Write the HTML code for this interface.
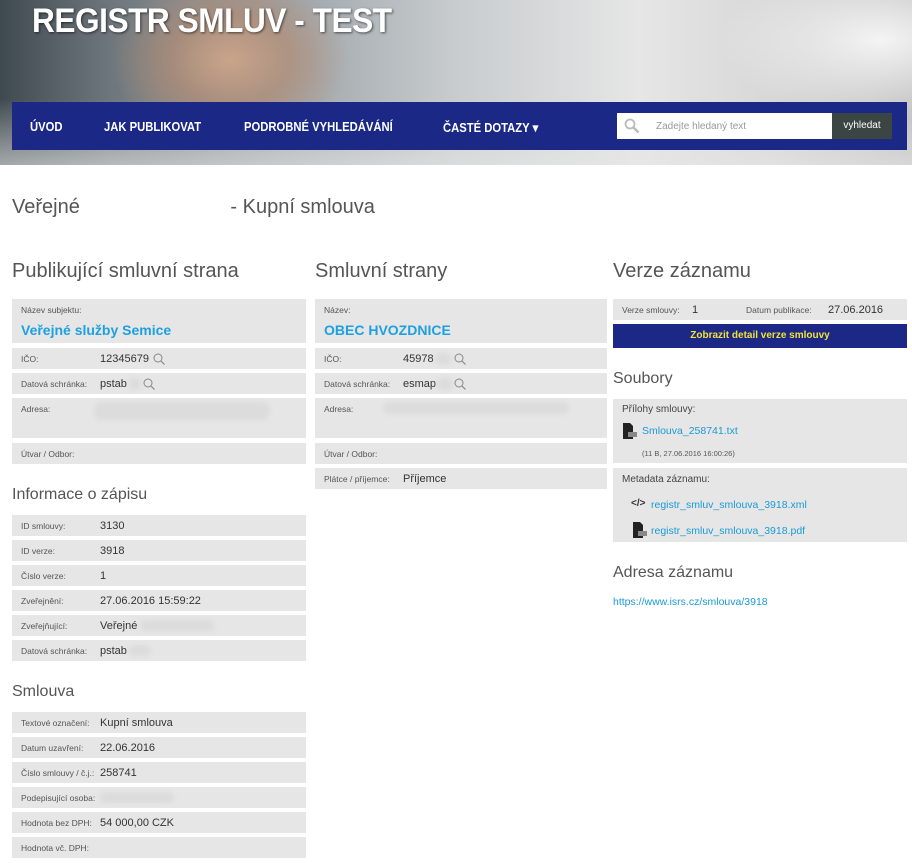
<!DOCTYPE html>
<html><head><meta charset="utf-8"><style>
*{margin:0;padding:0;box-sizing:border-box}
body{width:912px;height:863px;overflow:hidden;background:#fff;font-family:"Liberation Sans",sans-serif;position:relative;color:#333}
.a{position:absolute}
.hdr{left:0;top:0;width:912px;height:165px;background:
radial-gradient(ellipse 120px 90px at 230px 60px,#c9a48a 0%,rgba(180,140,115,.7) 50%,rgba(0,0,0,0) 100%),
radial-gradient(ellipse 160px 80px at 880px 40px,#f4f4f4,rgba(0,0,0,0)),
linear-gradient(180deg,rgba(0,0,0,0) 60%,rgba(230,230,230,.6) 100%),
linear-gradient(90deg,#3f4a50 0%,#6d767c 12%,#9aa2a8 30%,#c8ccce 50%,#e6e6e6 70%,#d7d7d7 85%,#bfbfbf 100%)}
.title{left:32px;top:2px;font-size:34px;font-weight:bold;color:#fff;letter-spacing:-0.5px;transform:scaleX(.93);transform-origin:left;text-shadow:1px 1px 3px rgba(0,0,0,.6)}
.nav{left:12px;top:102px;width:895px;height:48px;background:#1b2885}
.nav span{position:absolute;top:18px;color:#fff;font-weight:bold;font-size:12.5px;transform:scaleX(.9);transform-origin:left}
.row{background:#e6e6e6;height:21px}
.lb{position:absolute;left:9px;top:6px;font-size:8.5px;color:#555}
.vl{position:absolute;left:88px;top:5px;font-size:11px;color:#333}
.h2{font-size:20px;color:#555}
.h3{font-size:16px;color:#555}
.big{position:absolute;left:9px;top:23px;font-size:14px;font-weight:bold;color:#1ea0e0}
.blur{position:absolute;background:#dcdcdc;border-radius:8px;filter:blur(2px)}
a,.lk{color:#1a9ad6;text-decoration:none}
.mag{position:absolute;width:12px;height:12px}
</style></head><body>
<div class="a hdr"></div>
<div class="a title">REGISTR SMLUV - TEST</div>
<div class="a nav">
<span style="left:18px">ÚVOD</span>
<span style="left:92px">JAK PUBLIKOVAT</span>
<span style="left:232px">PODROBNÉ VYHLEDÁVÁNÍ</span>
<span style="left:431px">ČASTÉ DOTAZY ▾</span>
<div class="a" style="left:605px;top:11px;width:215px;height:26px;background:#fff"></div>
<svg class="a" style="left:612px;top:16px" width="16" height="16" viewBox="0 0 16 16"><circle cx="6" cy="6" r="4.5" fill="none" stroke="#bbb" stroke-width="1.8"/><line x1="9.5" y1="9.5" x2="14.5" y2="14.5" stroke="#bbb" stroke-width="2.5"/></svg>
<div class="a" style="left:644px;top:19px;font-size:10px;color:#999">Zadejte hledaný text</div>
<div class="a" style="left:820px;top:11px;width:60px;height:26px;background:#3b4543;color:#fff;font-size:10px;text-align:center;line-height:26px">vyhledat</div>
</div>

<div class="a h2" style="left:12px;top:196px">Veřejné <span style="display:inline-block;width:145px"></span>- Kupní smlouva</div>

<div class="a h2" style="left:12px;top:260px">Publikující smluvní strana</div>
<div class="a h2" style="left:315px;top:260px">Smluvní strany</div>
<div class="a h2" style="left:613px;top:260px">Verze záznamu</div>

<div class="a row" style="left:12px;top:299px;width:294px;height:44px"><div class="lb">Název subjektu:</div><div class="big">Veřejné služby Semice</div></div>
<div class="a row" style="left:12px;top:348px;width:294px"><div class="lb">IČO:</div><div class="vl">12345679</div><svg class="mag" style="left:141px;top:5px" viewBox="0 0 12 12"><circle cx="5" cy="5" r="4" fill="none" stroke="#888" stroke-width="1"/><line x1="8" y1="8" x2="11.5" y2="11.5" stroke="#888" stroke-width="1.2"/></svg></div>
<div class="a row" style="left:12px;top:373px;width:294px"><div class="lb">Datová schránka:</div><div class="vl">pstab</div><div class="blur" style="left:117px;top:5px;width:12px;height:12px"></div><svg class="mag" style="left:131px;top:5px" viewBox="0 0 12 12"><circle cx="5" cy="5" r="4" fill="none" stroke="#888" stroke-width="1"/><line x1="8" y1="8" x2="11.5" y2="11.5" stroke="#888" stroke-width="1.2"/></svg></div>
<div class="a row" style="left:12px;top:398px;width:294px;height:40px"><div class="lb">Adresa:</div><div class="blur" style="left:82px;top:4px;width:176px;height:18px"></div></div>
<div class="a row" style="left:12px;top:443px;width:294px"><div class="lb">Útvar / Odbor:</div></div>

<div class="a h3" style="left:12px;top:486px">Informace o zápisu</div>
<div class="a row" style="left:12px;top:515px;width:294px"><div class="lb">ID smlouvy:</div><div class="vl">3130</div></div>
<div class="a row" style="left:12px;top:540px;width:294px"><div class="lb">ID verze:</div><div class="vl">3918</div></div>
<div class="a row" style="left:12px;top:565px;width:294px"><div class="lb">Číslo verze:</div><div class="vl">1</div></div>
<div class="a row" style="left:12px;top:590px;width:294px"><div class="lb">Zveřejnění:</div><div class="vl">27.06.2016 15:59:22</div></div>
<div class="a row" style="left:12px;top:615px;width:294px"><div class="lb">Zveřejňující:</div><div class="vl">Veřejné</div><div class="blur" style="left:128px;top:5px;width:74px;height:11px"></div></div>
<div class="a row" style="left:12px;top:640px;width:294px"><div class="lb">Datová schránka:</div><div class="vl">pstab</div><div class="blur" style="left:117px;top:5px;width:22px;height:11px"></div></div>

<div class="a h3" style="left:12px;top:683px">Smlouva</div>
<div class="a row" style="left:12px;top:712px;width:294px"><div class="lb">Textové označení:</div><div class="vl">Kupní smlouva</div></div>
<div class="a row" style="left:12px;top:737px;width:294px"><div class="lb">Datum uzavření:</div><div class="vl">22.06.2016</div></div>
<div class="a row" style="left:12px;top:762px;width:294px"><div class="lb">Číslo smlouvy / č.j.:</div><div class="vl">258741</div></div>
<div class="a row" style="left:12px;top:787px;width:294px"><div class="lb">Podepisující osoba:</div><div class="blur" style="left:88px;top:5px;width:74px;height:11px"></div></div>
<div class="a row" style="left:12px;top:812px;width:294px"><div class="lb">Hodnota bez DPH:</div><div class="vl">54 000,00 CZK</div></div>
<div class="a row" style="left:12px;top:837px;width:294px"><div class="lb">Hodnota vč. DPH:</div></div>

<div class="a row" style="left:315px;top:299px;width:292px;height:44px"><div class="lb">Název:</div><div class="big">OBEC HVOZDNICE</div></div>
<div class="a row" style="left:315px;top:348px;width:292px"><div class="lb">IČO:</div><div class="vl">45978</div><div class="blur" style="left:120px;top:5px;width:16px;height:12px"></div><svg class="mag" style="left:139px;top:5px" viewBox="0 0 12 12"><circle cx="5" cy="5" r="4" fill="none" stroke="#888" stroke-width="1"/><line x1="8" y1="8" x2="11.5" y2="11.5" stroke="#888" stroke-width="1.2"/></svg></div>
<div class="a row" style="left:315px;top:373px;width:292px"><div class="lb">Datová schránka:</div><div class="vl">esmap</div><div class="blur" style="left:122px;top:5px;width:16px;height:12px"></div><svg class="mag" style="left:139px;top:5px" viewBox="0 0 12 12"><circle cx="5" cy="5" r="4" fill="none" stroke="#888" stroke-width="1"/><line x1="8" y1="8" x2="11.5" y2="11.5" stroke="#888" stroke-width="1.2"/></svg></div>
<div class="a row" style="left:315px;top:398px;width:292px;height:40px"><div class="lb">Adresa:</div><div class="blur" style="left:68px;top:4px;width:186px;height:12px"></div></div>
<div class="a row" style="left:315px;top:443px;width:292px"><div class="lb">Útvar / Odbor:</div></div>
<div class="a row" style="left:315px;top:468px;width:292px"><div class="lb">Plátce / příjemce:</div><div class="vl">Příjemce</div></div>

<div class="a row" style="left:613px;top:299px;width:294px"><div class="lb">Verze smlouvy:</div><div class="vl" style="left:79px">1</div><div class="lb" style="left:133px">Datum publikace:</div><div class="vl" style="left:215px">27.06.2016</div></div>
<div class="a" style="left:613px;top:324px;width:294px;height:24px;background:#1b2885;color:#f2e23a;font-weight:bold;font-size:10px;text-align:center;line-height:24px">Zobrazit detail verze smlouvy</div>
<div class="a h3" style="left:613px;top:370px">Soubory</div>
<div class="a row" style="left:613px;top:399px;width:294px;height:64px">
<div class="a" style="left:9px;top:5px;font-size:10px;color:#444">Přílohy smlouvy:</div>
<svg class="a" style="left:10px;top:24px" width="14" height="16" viewBox="0 0 14 16"><path d="M0 0h7l3 3v13H0z" fill="#222"/><rect x="5" y="9" width="9" height="5" fill="#888"/></svg>
<div class="a lk" style="left:29px;top:26px;font-size:10.5px">Smlouva_258741.txt</div>
<div class="a" style="left:29px;top:50px;font-size:7.5px;color:#555">(11 B, 27.06.2016 16:00:26)</div>
</div>
<div class="a row" style="left:613px;top:468px;width:294px;height:74px">
<div class="a" style="left:9px;top:6px;font-size:10px;color:#444">Metadata záznamu:</div>
<div class="a" style="left:18px;top:30px;font-size:10px;color:#333;font-weight:bold">&lt;/&gt;</div>
<div class="a lk" style="left:38px;top:31px;font-size:10.5px">registr_smluv_smlouva_3918.xml</div>
<svg class="a" style="left:20px;top:54px" width="14" height="16" viewBox="0 0 14 16"><path d="M0 0h7l3 3v13H0z" fill="#222"/><rect x="5" y="9" width="9" height="5" fill="#888"/></svg>
<div class="a lk" style="left:38px;top:57px;font-size:10.5px">registr_smluv_smlouva_3918.pdf</div>
</div>
<div class="a h3" style="left:613px;top:564px">Adresa záznamu</div>
<div class="a lk" style="left:613px;top:596px;font-size:10.5px">https://www.isrs.cz/smlouva/3918</div>
</body></html>
